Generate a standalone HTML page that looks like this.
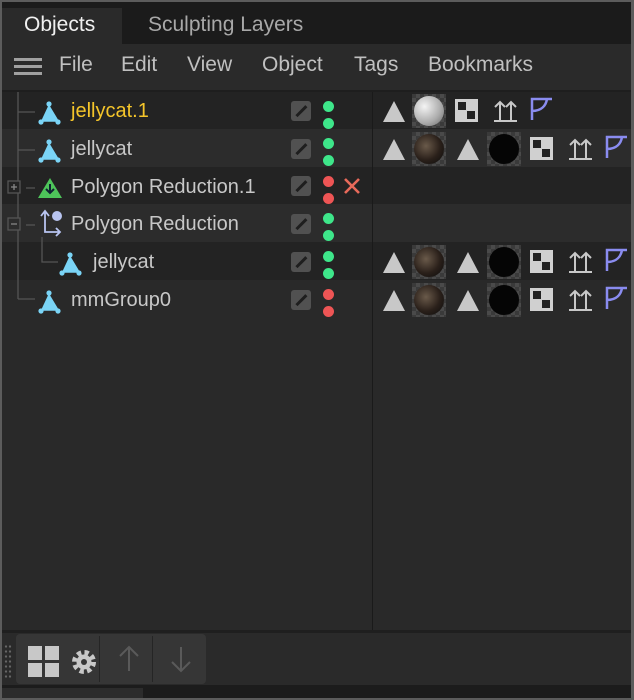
<!DOCTYPE html>
<html><head><meta charset="utf-8"><style>
*{margin:0;padding:0;box-sizing:border-box}
body{width:634px;height:700px;background:#5c5c5c;position:relative;overflow:hidden;font-family:"Liberation Sans",sans-serif}
.a{position:absolute}
#frame{left:2px;top:2px;width:629px;height:696px;background:#292929}
.t{color:#c8c8c8;font-size:20px;position:absolute;white-space:nowrap}
.m{color:#c0c0c0;font-size:21px;position:absolute;white-space:nowrap;top:51px}
.row{position:absolute;left:0;width:629px;height:38px}
.ed{position:absolute;left:289px;width:20px;height:20px;background:#515151;border-radius:3px}
.ed:after{content:"";position:absolute;left:9px;top:3px;width:2.5px;height:14px;background:#1e1e1e;transform:rotate(45deg)}
.dot{position:absolute;width:11px;height:11px;border-radius:50%;left:321px}
.g{background:#3ee68a}.r{background:#ee5555}
.sph{position:absolute;width:34px;height:34px;background:repeating-conic-gradient(#4a4a4a 0 25%,#3a3a3a 0 50%) 0 0/8px 8px}
.sph i{position:absolute;left:2px;top:2px;width:30px;height:30px;border-radius:50%}
</style></head><body>
<div id="frame" class="a">
<div class="a" style="left:0;top:0;width:629px;height:42px;background:#1b1b1b"></div>
<div class="a" style="left:0;top:6px;width:120px;height:36px;background:#2a2a2a"></div>
<div class="t" style="left:22px;top:11px;color:#f0f0f0;font-size:21px">Objects</div>
<div class="t" style="left:146px;top:11px;color:#a8a8a8;font-size:21px">Sculpting Layers</div>
<div class="a" style="left:0;top:42px;width:629px;height:46px;background:#2a2a2a"></div>
<div class="a" style="left:12px;top:56px;width:28px;height:3px;background:#a0a0a0;box-shadow:0 7px 0 #a0a0a0,0 14px 0 #a0a0a0"></div>
<div class="m" style="left:57px">File</div>
<div class="m" style="left:119px">Edit</div>
<div class="m" style="left:185px">View</div>
<div class="m" style="left:260px">Object</div>
<div class="m" style="left:352px">Tags</div>
<div class="m" style="left:426px">Bookmarks</div>
<div class="a" style="left:0;top:88px;width:629px;height:2px;background:#1e1e1e"></div>
<div class="row" style="top:90px;background:#232323"></div>
<div class="row" style="top:127px;background:#2c2c2c"></div>
<div class="row" style="top:165px;background:#232323"></div>
<div class="row" style="top:202px;background:#2c2c2c"></div>
<div class="row" style="top:240px;background:#232323"></div>
<div class="a" style="left:370px;top:90px;width:1px;height:540px;background:#1a1a1a"></div>
<svg class="a" style="left:0;top:90px" width="80" height="230">
<g stroke="#555" stroke-width="1.3" fill="none">
<path d="M16 0V207M16 20H33M16 58H33M16 96H6M24 96H33M16 133H6M24 133H33M16 207H33M40 145V170H56"/>
<rect x="6" y="89" width="12" height="12" fill="#232323"/>
<rect x="6" y="126" width="12" height="12" fill="#2c2c2c"/>
<path d="M9 95H15M12 92V98M9 132H15" stroke="#888"/>
</g></svg>
<svg class="a" style="left:0;top:90px" width="100" height="230">
<g fill="#7ad4f6">
<g id="tri"><path d="M47 14L40 29H56Z" fill="#7ad4f6" stroke="#7ad4f6" stroke-width="1.5" stroke-linejoin="round"/><circle cx="47" cy="12" r="2.6"/><circle cx="39" cy="30" r="2.6"/><circle cx="56" cy="30" r="2.6"/></g>
<use href="#tri" y="38"/>
<use href="#tri" x="21" y="151"/>
<use href="#tri" y="189"/>
</g>
<path d="M48 86L60 106H36Z" fill="#4ec45a"/>
<path d="M48 92V101M44 97L48 101L52 97" stroke="#123" stroke-width="2" fill="none"/>
<g stroke="#b8c4f0" stroke-width="1.8" fill="none"><path d="M43 119V140H58M39 124L43 119L47 124M54 136L58 140L54 144"/></g>
<circle cx="55" cy="124" r="5" fill="#b8c4f0"/>
</svg>
<div class="t" style="left:69px;top:98px;color:#f5c52a">jellycat.1</div>
<div class="t" style="left:69px;top:136px">jellycat</div>
<div class="t" style="left:69px;top:174px">Polygon Reduction.1</div>
<div class="t" style="left:69px;top:211px">Polygon Reduction</div>
<div class="t" style="left:91px;top:249px">jellycat</div>
<div class="t" style="left:69px;top:287px">mmGroup0</div>
<div class="ed" style="top:99px"></div><div class="ed" style="top:137px"></div><div class="ed" style="top:174px"></div><div class="ed" style="top:212px"></div><div class="ed" style="top:250px"></div><div class="ed" style="top:288px"></div>
<div class="dot g" style="top:99px"></div><div class="dot g" style="top:116px"></div>
<div class="dot g" style="top:136px"></div><div class="dot g" style="top:153px"></div>
<div class="dot r" style="top:174px"></div><div class="dot r" style="top:191px"></div>
<div class="dot g" style="top:211px"></div><div class="dot g" style="top:228px"></div>
<div class="dot g" style="top:249px"></div><div class="dot g" style="top:266px"></div>
<div class="dot r" style="top:287px"></div><div class="dot r" style="top:304px"></div>
<svg class="a" style="left:341px;top:175px" width="18" height="18"><path d="M2 2L16 16M16 2L2 16" stroke="#e86a5a" stroke-width="2.6"/></svg>
<svg class="a" style="left:371px;top:90px" width="258" height="230">
<defs>
<g id="tg"><path d="M12 7L23 28H1Z" fill="#c8c8c8"/></g>
<g id="ck"><rect x="0" y="0" width="23" height="23" fill="#d0d0d0"/><rect x="3" y="3" width="8" height="8" fill="#222"/><rect x="12" y="12" width="8" height="8" fill="#222"/></g>
<g id="ar" stroke="#c8c8c8" stroke-width="2" fill="none"><path d="M6 26V7M1 12L6 7L11 12M17 26V7M12 12L17 7L22 12M0 26H23"/></g>
<g id="ph" stroke="#8a8cf0" stroke-width="2.5" fill="none"><path d="M2 27V6H22M2 18C12 18 16 12 17 6"/></g>
</defs>
<use href="#tg" x="9" y="2"/><use href="#ck" x="82" y="7"/><use href="#ar" x="121" y="3"/><use href="#ph" x="157" y="1"/>
<g id="full"><use href="#tg" x="9" y="40"/><use href="#tg" x="83" y="40"/><use href="#ck" x="157" y="45"/><use href="#ar" x="196" y="41"/><use href="#ph" x="232" y="39"/></g>
<use href="#full" y="113"/><use href="#full" y="151"/>
</svg>
<div class="sph" style="left:410px;top:92px"><i style="background:radial-gradient(circle at 35% 35%,#f4f4f4,#aaa 60%,#666)"></i></div>
<div class="sph" style="left:410px;top:130px"><i style="background:radial-gradient(circle at 40% 40%,#6a5a4a,#2a201a 55%,#0a0a0a)"></i></div>
<div class="sph" style="left:485px;top:130px"><i style="background:#050505"></i></div>
<div class="sph" style="left:410px;top:243px"><i style="background:radial-gradient(circle at 40% 40%,#6a5a4a,#2a201a 55%,#0a0a0a)"></i></div>
<div class="sph" style="left:485px;top:243px"><i style="background:#050505"></i></div>
<div class="sph" style="left:410px;top:281px"><i style="background:radial-gradient(circle at 40% 40%,#6a5a4a,#2a201a 55%,#0a0a0a)"></i></div>
<div class="sph" style="left:485px;top:281px"><i style="background:#050505"></i></div>
<div class="a" style="left:0;top:628px;width:629px;height:3px;background:#1f1f1f"></div>
<div class="a" style="left:0;top:631px;width:629px;height:52px;background:#2a2a2a"></div>
<div class="a" style="left:2px;top:642px;width:8px;height:36px;background:radial-gradient(circle,#666 1px,transparent 1.3px) 0 0/4px 5px"></div>
<div class="a" style="left:14px;top:632px;width:190px;height:50px;background:#363636;border-radius:4px"></div>
<div class="a" style="left:97px;top:634px;width:1px;height:46px;background:#252525"></div>
<div class="a" style="left:150px;top:634px;width:1px;height:46px;background:#252525"></div>
<svg class="a" style="left:24px;top:642px" width="180" height="34">
<g fill="#c8c8c8"><rect x="2" y="2" width="14" height="14"/><rect x="19" y="2" width="14" height="14"/><rect x="2" y="19" width="14" height="14"/><rect x="19" y="19" width="14" height="14"/></g>
<g transform="translate(58 18)"><circle r="9" fill="none" stroke="#c8c8c8" stroke-width="6" stroke-dasharray="4 3.1"/><circle r="7.5" fill="#c8c8c8"/><circle r="3" fill="#363636"/></g>
<path d="M103 27V3M94 12L103 3L112 12M155 3V27M146 18L155 27L164 18" stroke="#5a5a5a" stroke-width="2" fill="none"/>
</svg>
<div class="a" style="left:0;top:683px;width:629px;height:13px;background:#1c1c1c"></div>
<div class="a" style="left:0;top:686px;width:141px;height:10px;background:#2c2c2c"></div>
</div>
</body></html>
